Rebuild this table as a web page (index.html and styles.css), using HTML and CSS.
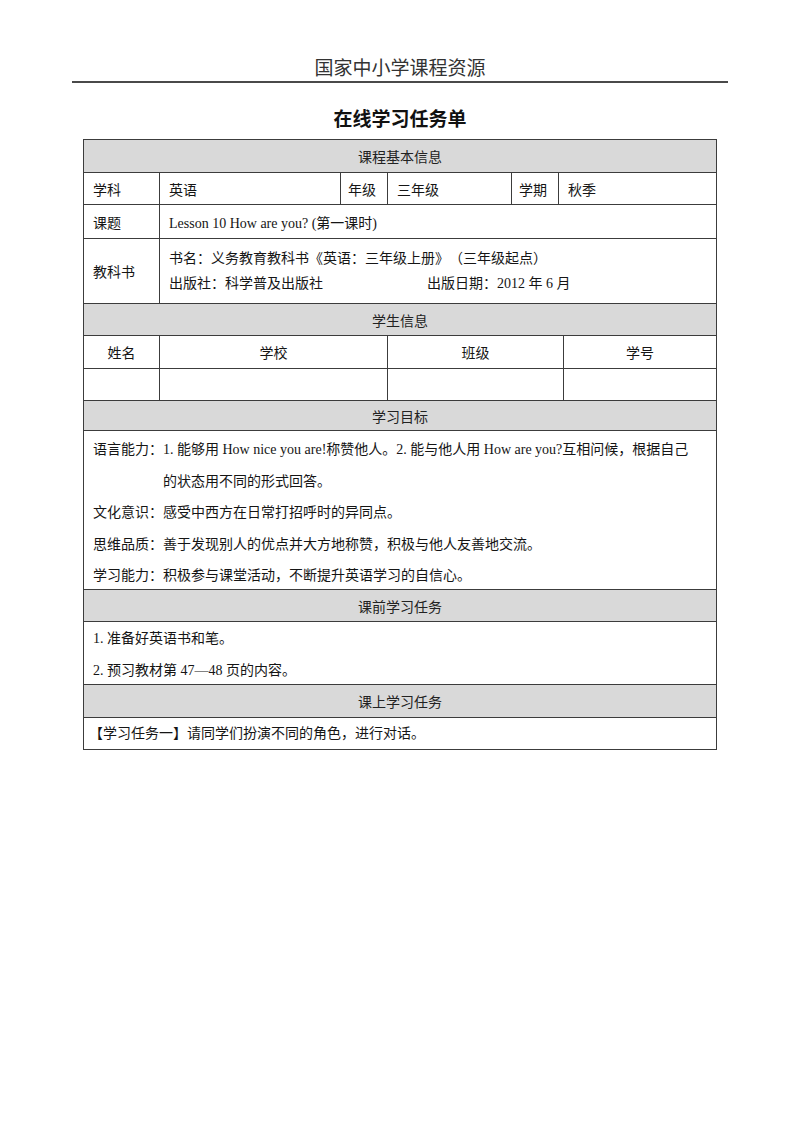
FILE: index.html
```html
<!DOCTYPE html>
<html lang="zh-CN">
<head>
<meta charset="utf-8">
<title>在线学习任务单</title>
<link rel="stylesheet" href="styles.css">
</head>
<body>
<header class="doc-header">国家中小学课程资源</header>
<h1 class="doc-title">在线学习任务单</h1>
<div class="sheet">
  <div class="band b-31">课程基本信息</div>
  <div class="row basic">
    <div class="cell">学科</div>
    <div class="cell">英语</div>
    <div class="cell">年级</div>
    <div class="cell">三年级</div>
    <div class="cell">学期</div>
    <div class="cell">秋季</div>
  </div>
  <div class="row pair topic">
    <div class="cell">课题</div>
    <div class="cell">Lesson 10 How are you? (第一课时)</div>
  </div>
  <div class="row pair book">
    <div class="cell">教科书</div>
    <div class="cell stack">
      <div class="line">书名：义务教育教科书《英语：三年级上册》（三年级起点）</div>
      <div class="line"><span class="pub">出版社：科学普及出版社</span><span>出版日期：2012 年 6 月</span></div>
    </div>
  </div>
  <div class="band b-31">学生信息</div>
  <div class="row student s-head">
    <div class="cell">姓名</div>
    <div class="cell">学校</div>
    <div class="cell">班级</div>
    <div class="cell">学号</div>
  </div>
  <div class="row student s-blank">
    <div class="cell"></div>
    <div class="cell"></div>
    <div class="cell"></div>
    <div class="cell"></div>
  </div>
  <div class="band b-29">学习目标</div>
  <div class="block goals">
    <div class="goal"><span class="label">语言能力：</span><span class="text">1. 能够用 How nice you are!称赞他人。2. 能与他人用 How are you?互相问候，根据自己<br>的状态用不同的形式回答。</span></div>
    <div class="goal"><span class="label">文化意识：</span><span class="text">感受中西方在日常打招呼时的异同点。</span></div>
    <div class="goal"><span class="label">思维品质：</span><span class="text">善于发现别人的优点并大方地称赞，积极与他人友善地交流。</span></div>
    <div class="goal"><span class="label">学习能力：</span><span class="text">积极参与课堂活动，不断提升英语学习的自信心。</span></div>
  </div>
  <div class="band b-31">课前学习任务</div>
  <div class="block pre">
    <div class="item">1. 准备好英语书和笔。</div>
    <div class="item">2. 预习教材第 47—48 页的内容。</div>
  </div>
  <div class="band b-32">课上学习任务</div>
  <div class="block task">
    <div class="item">【学习任务一】请同学们扮演不同的角色，进行对话。</div>
  </div>
</div>
</body>
</html>
```

FILE: styles.css
```css
* {
  box-sizing: border-box;
}

html, body {
  margin: 0;
  padding: 0;
  background: #ffffff;
}

body {
  font-family: "Liberation Serif", "Noto Sans CJK SC", serif;
  font-size: 14px;
  color: #151515;
  text-spacing-trim: space-all;
}

.doc-header {
  width: 656px;
  margin: 0 auto;
  padding-top: 57px;
  line-height: 24px;
  font-size: 19px;
  color: #333333;
  text-align: center;
  border-bottom: 2px solid #4a4a4a;
}

.doc-title {
  margin: 24px 0 6px;
  font-size: 19px;
  line-height: 26px;
  font-weight: bold;
  text-align: center;
  color: #111111;
}

.sheet {
  width: 634px;
  margin: 0 auto;
  border: 1px solid #3c3c3c;
}

.sheet > * + * {
  border-top: 1px solid #3c3c3c;
}

.band {
  background: #d9d9d9;
  text-align: center;
  display: flex;
  align-items: center;
  justify-content: center;
  color: #222222;
}

.b-31 { height: 32px; }
.b-29 { height: 30px; }
.b-32 { height: 33px; }

.row {
  display: grid;
}

.cell {
  display: flex;
  align-items: center;
  padding: 0 9px;
  border-right: 1px solid #3c3c3c;
  white-space: nowrap;
}

.cell:last-child {
  border-right: none;
}

.basic {
  grid-template-columns: 76px 181px 47px 124px 47px 1fr;
  height: 32px;
}

.basic .cell:nth-child(3),
.basic .cell:nth-child(5) {
  padding: 0 7px;
}

.pair {
  grid-template-columns: 76px 1fr;
}

.topic {
  height: 34px;
}

.book {
  height: 65px;
}

.stack {
  flex-direction: column;
  align-items: flex-start;
  justify-content: center;
}

.stack .line {
  line-height: 25px;
}

.pub {
  display: inline-block;
  width: 258px;
}

.student {
  grid-template-columns: 76px 228px 176px 1fr;
}

.student .cell {
  justify-content: center;
}

.s-head { height: 33px; }
.s-blank { height: 32px; }

.block {
  padding: 0 9px;
}

.goals {
  height: 159px;
  padding-top: 3px;
}

.goal {
  display: flex;
  line-height: 31.5px;
  white-space: nowrap;
}

.goal .label {
  flex: 0 0 70px;
}

.pre {
  height: 63px;
  padding-top: 1px;
}

.item {
  line-height: 32px;
  white-space: nowrap;
}

.pre .item + .item {
  line-height: 31px;
}

.task {
  height: 32px;
}

.task .item {
  line-height: 32px;
  margin-left: -4px;
}
```
